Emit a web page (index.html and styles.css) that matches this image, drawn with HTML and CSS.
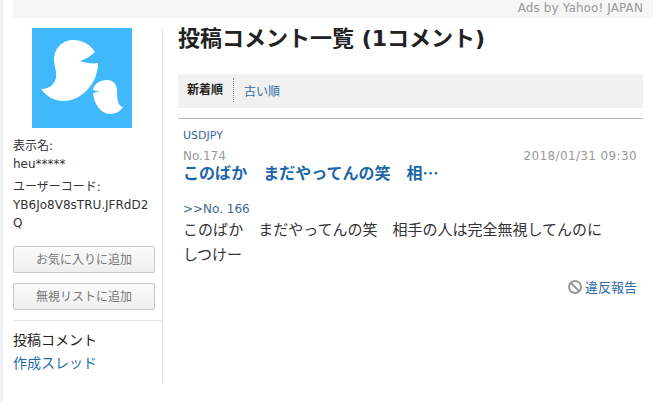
FILE: index.html
```html
<!DOCTYPE html>
<html lang="ja">
<head>
<meta charset="utf-8">
<title>投稿コメント一覧</title>
<link rel="stylesheet" href="styles.css">
</head>
<body>
<div class="page">
  <div class="adbar">Ads by Yahoo! JAPAN</div>
  <div class="layout">
    <aside class="side">
      <div class="avatar">
        <svg width="100" height="100" viewBox="0 0 100 100">
          <rect width="100" height="100" fill="#3fb9fb"/>
          <path d="M63 24 C58 16 50 12 41 12 C30 12 22 21 22 32 C22 38 25 43 24 50 C22 57 17 61 9 61 C14 68 22 73 31 73 C50 73 66 55 66 35 C60 36 54 35 48 33 C54 31 59 28 63 24 Z" fill="#fff"/>
          <path d="M61 62 C62 56 68 52 75 52 C81 52 85 56 85 63 C85 72 86 78 91 79 C88 84 83 86 78 86 C69 86 62 76 61 65 C63 65 65 64 67 63 C65 63 63 63 61 62 Z" fill="#fff"/>
        </svg>
      </div>
      <dl class="info">
        <dt class="label label-name">表示名:</dt>
        <dd class="value">heu*****</dd>
        <dt class="label label-code">ユーザーコード:</dt>
        <dd class="value">YB6Jo8V8sTRU.JFRdD2Q</dd>
      </dl>
      <div class="actions">
        <button class="btn">お気に入りに追加</button>
        <button class="btn">無視リストに追加</button>
      </div>
      <nav class="sidenav">
        <span class="nav-current">投稿コメント</span>
        <a class="nav-link" href="#">作成スレッド</a>
      </nav>
    </aside>
    <main class="main">
      <h1 class="title">投稿コメント一覧 (1コメント)</h1>
      <div class="sortbar">
        <span class="sort-current">新着順</span>
        <a class="sort-link" href="#">古い順</a>
      </div>
      <article class="comment">
        <a class="pair" href="#">USDJPY</a>
        <div class="meta">
          <span class="num">No.174</span>
          <span class="date">2018/01/31 09:30</span>
        </div>
        <a class="comment-title" href="#">このばか　まだやってんの笑　相<span class="ellipsis">…</span></a>
        <a class="reply" href="#">&gt;&gt;No. 166</a>
        <p class="body-text">このばか　まだやってんの笑　相手の人は完全無視してんのにしつけー</p>
        <div class="report">
          <svg class="report-icon" width="16" height="16" viewBox="0 0 16 16">
            <circle cx="8" cy="8" r="6" fill="none" stroke="#999" stroke-width="2"/>
            <path d="M4 4 L12 12" stroke="#999" stroke-width="2"/>
          </svg>
          <a class="report-link" href="#">違反報告</a>
        </div>
      </article>
    </main>
  </div>
</div>
</body>
</html>
```
FILE: styles.css
```css
* { box-sizing: border-box; }
html, body { margin: 0; padding: 0; background: #fff; }
body {
  width: 661px;
  height: 403px;
  overflow: hidden;
  font-family: "DejaVu Sans", "Noto Sans CJK JP", sans-serif;
  color: #222;
}
.page {
  padding-left: 10px;
  border-left: 3px solid #eef2f5;
  padding-right: 8px;
  height: 403px;
}
.adbar {
  height: 18px;
  background: #f6f6f6;
  text-align: right;
  font-size: 12px;
  line-height: 17px;
  color: #999;
  padding-right: 10px;
  letter-spacing: 0.1px;
}
.layout { display: flex; margin-top: 10px; }
.side {
  width: 150px;
  height: 355px;
  border-right: 1px solid #e4e4e4;
  flex: none;
}
.avatar { width: 100px; height: 100px; margin-left: 19px; }
.avatar svg { display: block; }
.info { margin: 10px 0 0; font-size: 12px; line-height: 18px; }
.label { color: #333; }
.label-name { line-height: 17px; }
.label-code { margin-top: 5px; }
.value { margin: 0; width: 139px; word-break: break-all; color: #333; }
.actions { display: flex; flex-direction: column; gap: 10px; margin-top: 14px; padding-right: 7px; }
.btn {
  height: 27px;
  width: 142px;
  border: 1px solid #c8c8c8;
  border-radius: 2px;
  background: linear-gradient(#fbfbfb, #efefef);
  font: 12px/1 "DejaVu Sans", "Noto Sans CJK JP", sans-serif;
  color: #777;
  padding: 0;
}
.sidenav {
  margin-top: 10px;
  border-top: 1px solid #e4e4e4;
  padding-top: 8px;
  display: flex;
  flex-direction: column;
  font-size: 14px;
  line-height: 23px;
}
.nav-current { color: #222; }
.nav-link { color: #1f6ca8; text-decoration: none; }
.main { width: 465px; margin-left: 15px; }
.title { margin: 0; font-size: 22px; line-height: 22px; font-weight: bold; color: #222; }
.sortbar {
  margin-top: 24px;
  height: 34px;
  background: #f1f1f1;
  display: flex;
  align-items: center;
  padding: 0 0 2px 9px;
  font-size: 12px;
}
.sort-current { font-weight: bold; padding-right: 10px; border-right: 1px dotted #888; line-height: 24px; color: #222; }
.sort-link { color: #2f6ea5; text-decoration: none; margin-left: 10px; }
.comment { margin-top: 10px; border-top: 1px solid #bbb; padding: 10px 6px 0 5px; }
.pair { display: block; font-size: 11px; line-height: 14px; color: #41698f; text-decoration: none; }
.meta { display: flex; justify-content: space-between; font-size: 12px; line-height: 16px; color: #999; margin-top: 5px; }
.date { letter-spacing: 0.37px; }
.comment-title { display: block; height: 19px; font-size: 16px; line-height: 17px; font-weight: bold; color: #1a66a8; text-decoration: none; }
.ellipsis { font-family: "Noto Sans CJK JP", sans-serif; line-height: 1; }
.reply { display: block; margin-top: 18px; font-size: 12px; line-height: 16px; color: #41698f; text-decoration: none; }
.body-text { margin: 1px 0 0; font-size: 15px; line-height: 25px; color: #333; width: 425px; }
.report { display: flex; justify-content: flex-end; align-items: center; margin-top: 9px; gap: 2px; }
.report-icon { display: block; }
.report-link { font-size: 13px; color: #2f6ea5; text-decoration: none; }
```
